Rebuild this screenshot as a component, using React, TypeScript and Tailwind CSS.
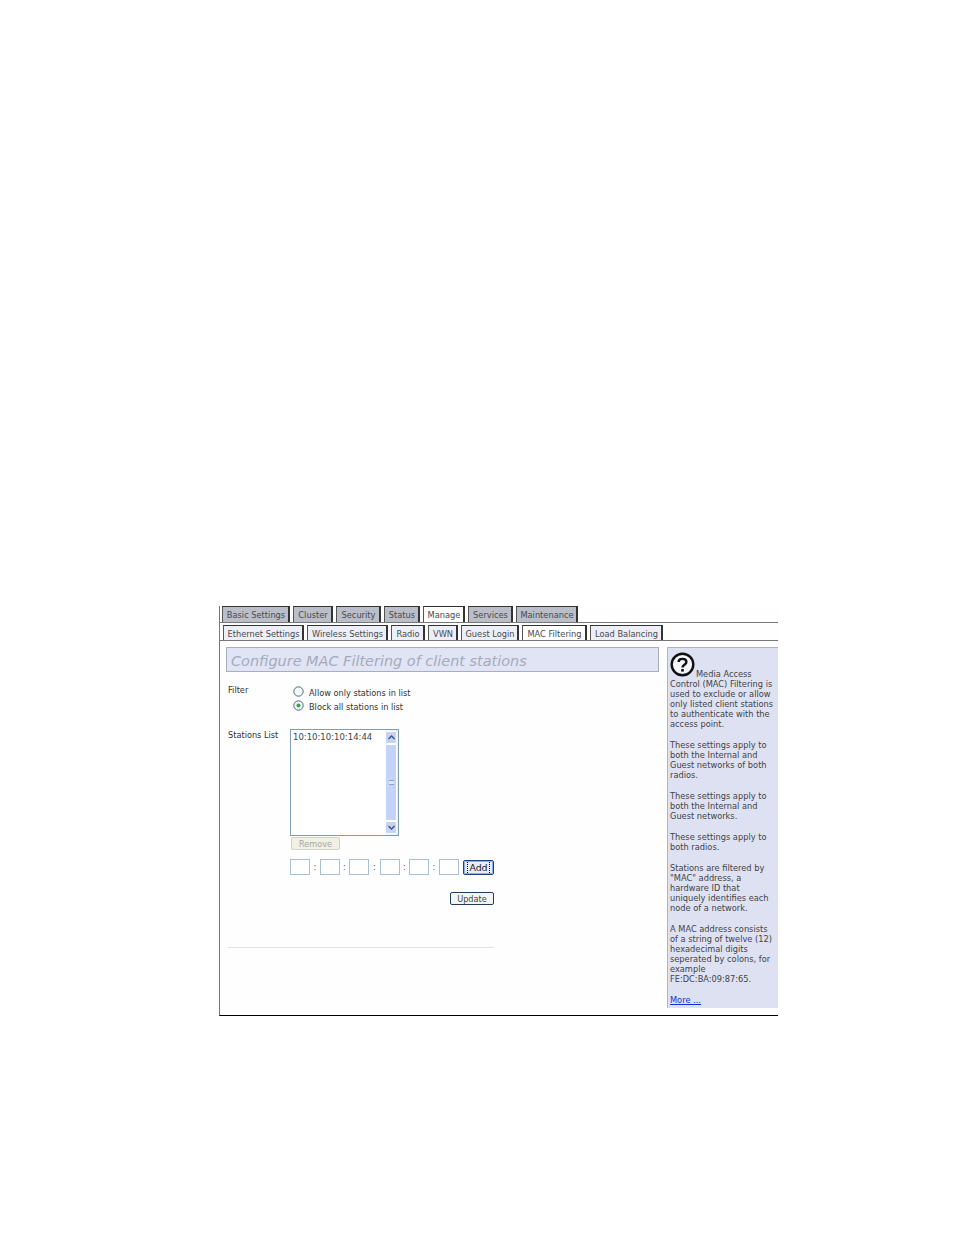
const font = "font-['DejaVu_Sans',sans-serif]";

const tabs1: [string, number, boolean][] = [
  ["Basic Settings", 68, false],
  ["Cluster", 40, false],
  ["Security", 45, false],
  ["Status", 36, false],
  ["Manage", 42, true],
  ["Services", 45, false],
  ["Maintenance", 62, false],
];
const tabs2: [string, number, boolean][] = [
  ["Ethernet Settings", 81, false],
  ["Wireless Settings", 81, false],
  ["Radio", 34, false],
  ["VWN", 30, false],
  ["Guest Login", 58, false],
  ["MAC Filtering", 65, true],
  ["Load Balancing", 73, false],
];

function Tab({ label, width, active, grey }: { label: string; width: number; active: boolean; grey: boolean }) {
  return (
    <div
      style={{ width }}
      className={`h-[16px] shrink-0 border-l border-t border-r-2 border-l-[#555] border-t-[#333] border-r-[#333] pl-px text-center text-[8.25px] leading-[17px] whitespace-nowrap text-[#4a4a4a] ${
        active ? "bg-white" : grey ? "bg-[#b9bec9]" : "bg-[#eceef8]"
      }`}
    >
      {label}
    </div>
  );
}

function Radio({ on }: { on: boolean }) {
  return (
    <svg width="11" height="11" viewBox="0 0 11 11" className="shrink-0">
      <circle cx="5.5" cy="5.5" r="4.7" fill="#f4f6f8" stroke="#4a6a8c" strokeWidth="1" />
      {on && <circle cx="5.5" cy="5.5" r="2" fill="#3fa04a" />}
    </svg>
  );
}

function MacBox() {
  return <div className="w-[20px] h-[16px] border border-[#a9bfd4] bg-white shrink-0" />;
}

function Arrow({ up }: { up: boolean }) {
  return (
    <div className="h-[13px] w-[12px] bg-[#c4d4f4] flex items-center justify-center border border-white rounded-[2px]">
      <svg width="7" height="5" viewBox="0 0 7 5">
        <path d={up ? "M0.5 4 L3.5 1 L6.5 4" : "M0.5 1 L3.5 4 L6.5 1"} fill="none" stroke="#3c5484" strokeWidth="1.4" />
      </svg>
    </div>
  );
}

function Para({ children }: { children: React.ReactNode }) {
  return <p className="mb-[11px]">{children}</p>;
}

export default function App() {
  return (
    <div className={`${font} w-[954px] h-[1235px] bg-white pt-[606px] pl-[219px]`}>
      <div className="w-[559px] h-[410px] border-l border-l-[#777] border-b border-b-black bg-[#fefefe] flex flex-col">
        <div className="flex h-[16px] pl-[2px] gap-[3px]">
          {tabs1.map(([l, w, a]) => (
            <Tab key={l} label={l} width={w} active={a} grey />
          ))}
        </div>
        <div className="h-px bg-[#777]" />
        <div className="flex h-[15px] mt-[2px] pl-[3px] gap-[3px]">
          {tabs2.map(([l, w, a]) => (
            <Tab key={l} label={l} width={w} active={a} grey={false} />
          ))}
        </div>
        <div className="h-px bg-[#777]" />
        <div className="flex flex-1 pt-[6px] pl-[6px]">
          <div className="w-[433px] shrink-0">
            <div className="h-[25px] bg-[#e0e4f4] border border-[#a8aebc] pl-[4px] pt-[1px] text-[14.45px] leading-[24px] italic text-[#a6abbb] whitespace-nowrap">
              Configure MAC Filtering of client stations
            </div>
            <div className="flex mt-[13px] pl-[2px] text-[8.2px] text-[#333]">
              <div className="w-[65px] leading-[11px]">Filter</div>
              <div className="flex flex-col gap-[3px] pt-px">
                <div className="flex items-center gap-[5px] h-[11px]">
                  <Radio on={false} />
                  <span className="mt-[4px]">Allow only stations in list</span>
                </div>
                <div className="flex items-center gap-[5px] h-[11px]">
                  <Radio on />
                  <span className="mt-[4px]">Block all stations in list</span>
                </div>
              </div>
            </div>
            <div className="flex mt-[18px] pl-[2px] text-[8.2px] text-[#333]">
              <div className="w-[62px] leading-[11px] pt-px whitespace-nowrap">Stations List</div>
              <div className="w-[204px]">
                <div className="w-[109px] h-[107px] border border-[#7f9db9] bg-white flex">
                  <div className="flex-1 pl-[2px] pt-[1px] leading-[12px] text-[#444] text-[8.5px]">10:10:10:10:14:44</div>
                  <div className="w-[13px] flex flex-col bg-[#eef0f6] py-px pr-px">
                    <Arrow up />
                    <div className="flex-1 bg-[#c4d4f8] border border-white flex items-center justify-center">
                      <div className="w-[5px] h-[5px] border-y border-[#8ea4d0] bg-[#dde6fa]" />
                    </div>
                    <Arrow up={false} />
                  </div>
                </div>
                <div className="mt-[1px] ml-px w-[49px] h-[13px] bg-[#f0f0e6] border border-[#d2d2c4] rounded-[2px] text-center text-[8.2px] leading-[13px] text-[#aaa89a]">
                  Remove
                </div>
                <div className="mt-[9px] flex items-center">
                  <MacBox />
                  <span className="w-[10px] text-center text-[#555] leading-none">:</span>
                  <MacBox />
                  <span className="w-[9px] text-center text-[#555] leading-none">:</span>
                  <MacBox />
                  <span className="w-[11px] text-center text-[#555] leading-none">:</span>
                  <MacBox />
                  <span className="w-[9px] text-center text-[#555] leading-none">:</span>
                  <MacBox />
                  <span className="w-[10px] text-center text-[#555] leading-none">:</span>
                  <MacBox />
                  <div className="ml-[4px] w-[31px] h-[15px] bg-[#e8ecf8] border border-[#1f3f7f] outline outline-[#8ab0e8] -outline-offset-2 rounded-[2px] text-center text-[9.4px] leading-[13px] text-[#222]">
                    <span className="border-x border-dotted border-black px-px">Add</span>
                  </div>
                </div>
                <div className="mt-[17px] flex justify-end">
                  <div className="w-[44px] h-[13px] bg-[#f4f4f0] border border-[#1f3f5f] rounded-[2px] text-center text-[8.2px] leading-[13px] text-[#444]">
                    Update
                  </div>
                </div>
              </div>
            </div>
            <div className="mt-[42px] ml-[2px] w-[266px] h-px bg-[#dfe2e8]" />
          </div>
          <div className="ml-[8px] w-[111px] h-[361px] bg-[#dde1f2] border-l border-t border-[#b0b4c4] pl-[2px] pt-[4px] text-[8.26px] leading-[10px] text-[#444]">
            <div className="h-[17px] relative">
              <svg width="25" height="25" viewBox="0 0 25 25" className="absolute left-0 top-0">
                <circle cx="12.5" cy="12.5" r="10.8" fill="#f4f6fb" stroke="#111" strokeWidth="2.4" />
                <path d="M8.6 10 C8.6 5.8 16.4 5.8 16.4 10 C16.4 12.8 12.5 12.6 12.5 15.6" fill="none" stroke="#111" strokeWidth="2.4" />
                <rect x="11.2" y="17" width="2.6" height="2.6" fill="#111" />
              </svg>
            </div>
            <Para>
              <span className="pl-[26px]">Media Access</span>
              <br />
              Control (MAC) Filtering is
              <br />
              used to exclude or allow
              <br />
              only listed client stations
              <br />
              to authenticate with the
              <br />
              access point.
            </Para>
            <Para>
              These settings apply to
              <br />
              both the Internal and
              <br />
              Guest networks of both
              <br />
              radios.
            </Para>
            <Para>
              These settings apply to
              <br />
              both the Internal and
              <br />
              Guest networks.
            </Para>
            <Para>
              These settings apply to
              <br />
              both radios.
            </Para>
            <Para>
              Stations are filtered by
              <br />
              "MAC" address, a
              <br />
              hardware ID that
              <br />
              uniquely identifies each
              <br />
              node of a network.
            </Para>
            <Para>
              A MAC address consists
              <br />
              of a string of twelve (12)
              <br />
              hexadecimal digits
              <br />
              seperated by colons, for
              <br />
              example
              <br />
              FE:DC:BA:09:87:65.
            </Para>
            <a className="text-[#1030e0] underline">More ...</a>
          </div>
        </div>
      </div>
    </div>
  );
}
